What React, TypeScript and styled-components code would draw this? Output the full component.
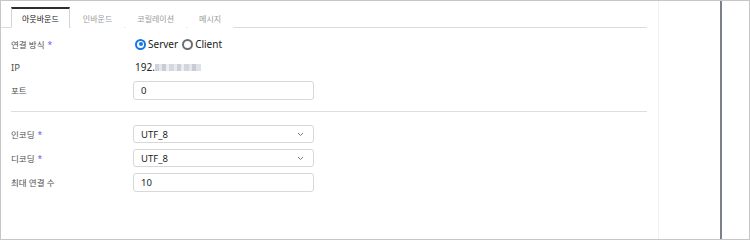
import styled, { createGlobalStyle } from "styled-components";

const Global = createGlobalStyle`
  * { box-sizing: border-box; }
  body {
    margin: 0;
    background: #fff;
    font-family: "Noto Sans", "Noto Sans CJK KR", sans-serif;
  }
`;

const Frame = styled.div`
  width: 750px;
  height: 240px;
  border: 1px solid #c6c6c6;
  display: flex;
  overflow: hidden;
  background: #fff;
`;

const Main = styled.div`
  width: 658px;
  padding-right: 11px;
  border-right: 1px solid #f1f1f1;
`;

const Spacer = styled.div`
  width: 61px;
`;

const Bar = styled.div`
  width: 2px;
  background: #7c808b;
`;

const TabBar = styled.div`
  display: flex;
  gap: 1px;
  padding: 6px 0 0 10px;
  border-bottom: 1px solid #dcdcdc;
`;

const Tab = styled.div<{ $active?: boolean }>`
  height: 21px;
  padding: 0 ${(p) => (p.$active ? "10px" : "11px")};
  margin-bottom: -1px;
  display: flex;
  align-items: center;
  font-size: 8px;
  color: ${(p) => (p.$active ? "#222" : "#9a9a9a")};
  background: #fff;
  border: 1px solid ${(p) => (p.$active ? "#d4d4d4" : "transparent")};
  border-top: 2px solid ${(p) => (p.$active ? "#2d2d2d" : "transparent")};
  border-bottom: 1px solid ${(p) => (p.$active ? "#fff" : "transparent")};
`;

const Section = styled.div<{ $top: number; $gap: number }>`
  display: flex;
  flex-direction: column;
  gap: ${(p) => p.$gap}px;
  padding: ${(p) => p.$top}px 0 0 10px;
`;

const Row = styled.div`
  display: flex;
  align-items: center;
  height: 22px;
`;

const Label = styled.div`
  width: 122px;
  font-size: 8.5px;
  color: #4f4f4f;
`;

const LatinLabel = styled(Label)`
  font-size: 9.5px;
`;

const Req = styled.span`
  color: #6657ee;
  margin-left: 3px;
`;

const Divider = styled.div`
  height: 1px;
  background: #dedede;
  margin: 10px 0 0 10px;
`;

const Radios = styled.div`
  display: flex;
  align-items: center;
  gap: 4px;
  margin-left: 2px;
`;

const RadioItem = styled.label`
  display: flex;
  align-items: center;
  gap: 2px;
  font-size: 10px;
  color: #222;
`;

const Dot = styled.span<{ $on?: boolean }>`
  width: 11px;
  height: 11px;
  border-radius: 50%;
  border: 2px solid ${(p) => (p.$on ? "#1677e5" : "#6b6e74")};
  background: #fff;
  display: flex;
  align-items: center;
  justify-content: center;
  &::after {
    content: "";
    width: 4px;
    height: 4px;
    border-radius: 50%;
    background: ${(p) => (p.$on ? "#1677e5" : "transparent")};
  }
`;

const Value = styled.div`
  display: flex;
  align-items: center;
  margin-left: 2px;
  font-size: 10px;
  color: #222;
`;

const Blur = styled.span<{ $c: string; $w: number }>`
  display: inline-block;
  width: ${(p) => p.$w}px;
  height: 7px;
  background: ${(p) => p.$c};
`;

const Field = styled.div<{ $h: number }>`
  width: 181px;
  height: ${(p) => p.$h}px;
  border: 1px solid #d8d8d8;
  border-radius: 3px;
  display: flex;
  align-items: center;
  justify-content: space-between;
  padding: 0 9px 0 7px;
  font-size: 9.5px;
  color: #222;
`;

const Chevron = () => (
  <svg width="7" height="5" viewBox="0 0 7 5">
    <path d="M1 1 L3.5 3.5 L6 1" fill="none" stroke="#777" strokeWidth="1" />
  </svg>
);

const blurs: [string, number][] = [
  ["#cfd2dc", 4],
  ["#e4e6ec", 3],
  ["#c9ccd8", 4],
  ["#eceef2", 3],
  ["#d6d8e0", 5],
  ["#e8e9ee", 3],
  ["#cdd0da", 4],
  ["#eceef2", 3],
  ["#d2d4de", 5],
  ["#e4e6ec", 3],
  ["#c8cbd6", 4],
  ["#dfe1e8", 5],
];

export default function App() {
  return (
    <>
      <Global />
      <Frame>
        <Main>
          <TabBar>
            <Tab $active>아웃바운드</Tab>
            <Tab>인바운드</Tab>
            <Tab>코릴레이션</Tab>
            <Tab>메시지</Tab>
          </TabBar>
          <Section $top={5} $gap={1}>
            <Row>
              <Label>
                연결 방식<Req>*</Req>
              </Label>
              <Radios>
                <RadioItem>
                  <Dot $on />
                  Server
                </RadioItem>
                <RadioItem>
                  <Dot />
                  Client
                </RadioItem>
              </Radios>
            </Row>
            <Row>
              <LatinLabel>IP</LatinLabel>
              <Value>
                192.
                {blurs.map(([c, w], i) => (
                  <Blur key={i} $c={c} $w={w} />
                ))}
              </Value>
            </Row>
            <Row>
              <Label>포트</Label>
              <Field $h={19}>0</Field>
            </Row>
          </Section>
          <Divider />
          <Section $top={11} $gap={2}>
            <Row>
              <Label>
                인코딩<Req>*</Req>
              </Label>
              <Field $h={18}>
                UTF_8
                <Chevron />
              </Field>
            </Row>
            <Row>
              <Label>
                디코딩<Req>*</Req>
              </Label>
              <Field $h={18}>
                UTF_8
                <Chevron />
              </Field>
            </Row>
            <Row>
              <Label>최대 연결 수</Label>
              <Field $h={19}>10</Field>
            </Row>
          </Section>
        </Main>
        <Spacer />
        <Bar />
      </Frame>
    </>
  );
}
